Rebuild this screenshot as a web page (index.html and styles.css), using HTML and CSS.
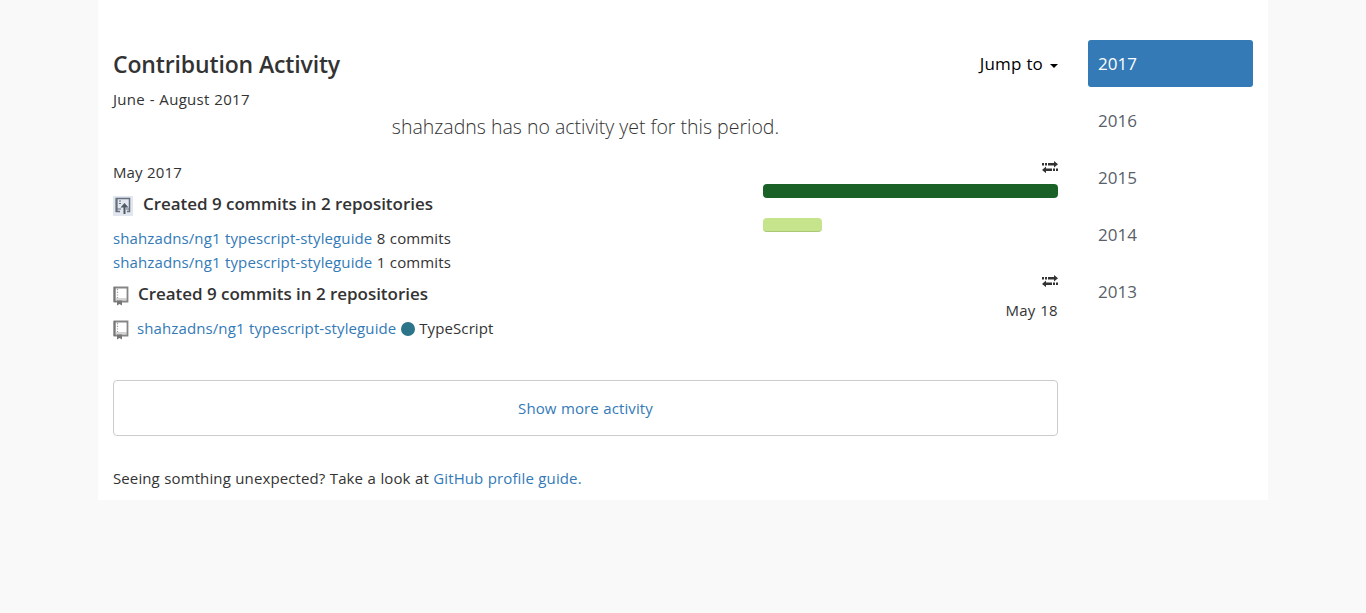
FILE: index.html
```html
<!DOCTYPE html>
<html lang="en">
<head>
<meta charset="utf-8">
<title>Contribution Activity</title>
<link rel="stylesheet" href="styles.css">
</head>
<body>
<svg class="defs" width="0" height="0">
  <symbol id="swap" viewBox="0 0 16 12">
    <path d="M0 2h2v2.500H0zM3 2h2v2.500H3zM6 2h6V0l4 3.200-4 3.200V4.500H6zM4 5.600v2h6v2.500H4v2L0 8.900zM11 7.600h2v2.500h-2zM14 7.600h2v2.500h-2z"/>
  </symbol>
  <symbol id="repo" viewBox="0 0 16 20">
    <path d="M1.500 1.500h13v14h-13z" fill="#fff" stroke="#858585" stroke-width="1.800"/>
    <path d="M1.500 1v15" stroke="#777" stroke-width="2"/>
    <path d="M4.500 3v9" stroke="#999" stroke-width="1.200" stroke-dasharray="1.200 1.500"/>
    <path d="M2 13h12" stroke="#aaa" stroke-width="1"/>
    <path d="M4 14.500h5v5l-2.500-1.500-2.500 1.500z" fill="#777"/>
  </symbol>
</svg>
<div class="container">
  <main class="activity">
    <header class="top">
      <h1>Contribution Activity</h1>
      <span class="jump">Jump to <i class="caret"></i></span>
    </header>
    <div class="period">June - August 2017</div>
    <div class="empty">shahzadns has no activity yet for this period.</div>
    <section class="month">
      <div class="details">
        <div class="date">May 2017</div>
        <h2 class="commits">
          <svg class="push" viewBox="0 0 20 20"><path fill="#e1e6ef" d="M0 0h20v20H0z"/><path d="M7 15.500H3.500v-13h13v13H14" fill="none" stroke="#66707c" stroke-width="1.500"/><path d="M3.500 2v14" stroke="#66707c" stroke-width="2"/><path d="M6 5h2M6 7.500h2M4 13h4M13 13h3" stroke="#66707c"/><path d="M11.500 7l4 4.500h-3V18h-2v-6.500h-3z" fill="#505a65"/></svg>
          <span>Created 9 commits in 2 repositories</span>
        </h2>
        <p><a>shahzadns/ng1 typescript-styleguide</a> 8 commits</p>
        <p><a>shahzadns/ng1 typescript-styleguide</a> 1 commits</p>
        <h2 class="created"><svg class="repo"><use href="#repo"/></svg><span>Created 9 commits in 2 repositories</span></h2>
        <p class="repository"><svg class="repo"><use href="#repo"/></svg><span><a>shahzadns/ng1 typescript-styleguide</a> <i class="dot"></i> TypeScript</span></p>
      </div>
      <div class="charts">
        <svg class="swap"><use href="#swap"/></svg>
        <div class="bar dark"></div>
        <div class="bar light"></div>
        <svg class="swap second"><use href="#swap"/></svg>
        <span class="day">May 18</span>
      </div>
    </section>
    <button class="more">Show more activity</button>
    <p class="footer">Seeing somthing unexpected? Take a look at <a>GitHub profile guide.</a></p>
  </main>
  <nav class="years">
    <a class="active">2017</a><a>2016</a><a>2015</a><a>2014</a><a>2013</a>
  </nav>
</div>
</body>
</html>
```
FILE: styles.css
```css
* { box-sizing: border-box; }
body { margin: 0; background: #f9f9f9; color: #333; font: 15px/24px "Open Sans", sans-serif; letter-spacing: .11px; word-spacing: .4px; }
h1, h2, p { margin: 0; }
a { color: #337ab7; }
.defs { display: none; }
.container { width: 1170px; height: 500px; margin: 0 auto; padding: 40px 15px 0; background: #fff; display: flex; gap: 30px; }
.activity { width: 945px; }
.top { display: flex; justify-content: space-between; height: 47px; align-items: flex-start; }
h1 { font-size: 23px; font-weight: 600; line-height: 48px; letter-spacing: -.14px; word-spacing: 0; }
.jump { display: flex; align-items: center; gap: 7px; height: 48px; color: #000; font-size: 17px; letter-spacing: .15px; }
.caret { border: 4px solid transparent; border-top-color: #000; border-bottom: 0; margin-top: 3px; }
.period { height: 25px; letter-spacing: .3px; }
.empty { height: 30px; line-height: 30px; text-align: center; font-size: 19.5px; font-weight: 300; letter-spacing: 0; word-spacing: 0; }
.month { display: flex; justify-content: space-between; height: 238px; padding-top: 18px; }
h2 { display: flex; font-size: 17px; font-weight: 600; line-height: 24px; letter-spacing: -.04px; word-spacing: 0; }
.commits { gap: 10px; height: 35px; margin-top: 7px; }
.commits span { padding-top: 1px; }
.push { width: 20px; height: 20px; margin-top: 5px; }
.created { gap: 9px; height: 34px; margin-top: 8px; }
.repo { width: 16px; height: 20px; margin-top: 4px; }
.repository { display: flex; gap: 8px; }
.dot { display: inline-block; width: 14px; height: 14px; border-radius: 50%; background: #2b7489; vertical-align: -2px; }
.charts { width: 295px; display: flex; flex-direction: column; }
.swap { width: 16px; height: 12px; margin: 1px 0 11px; align-self: flex-end; fill: #333; }
.bar { height: 14px; border-radius: 4px; }
.dark { background: #196127; }
.light { width: 59px; margin-top: 20px; background: #c6e48b; border-bottom: 1px solid #acc778; }
.second { margin: 43px 0 11px; }
.day { align-self: flex-end; letter-spacing: .3px; }
.more { display: block; width: 945px; height: 56px; background: #fff; border: 1px solid #ccc; border-radius: 4px; font: inherit; letter-spacing: inherit; word-spacing: inherit; color: #337ab7; }
.footer { margin-top: 30px; }
.years { width: 165px; display: flex; flex-direction: column; gap: 10px; }
.years a { height: 47px; padding: 0 10px; line-height: 47px; font-size: 17px; letter-spacing: 0; color: #586069; border-radius: 3px; }
.years .active { background: #337ab7; color: #fff; }
```
